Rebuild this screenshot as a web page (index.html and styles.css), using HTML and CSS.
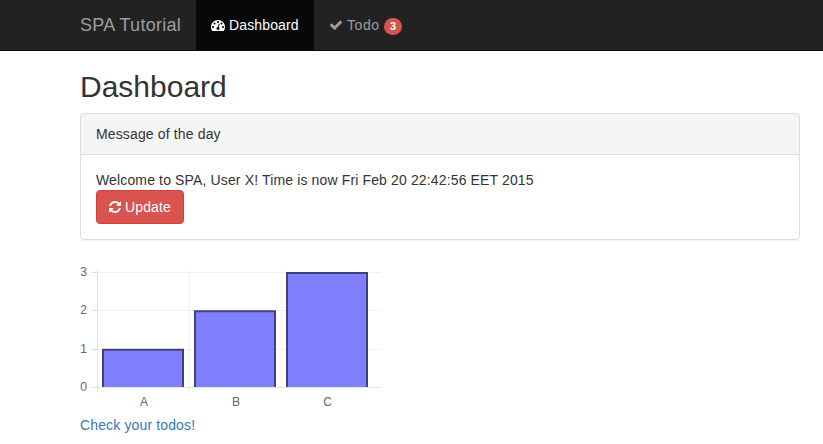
FILE: index.html
```html
<!DOCTYPE html>
<html lang="en">
<head>
<meta charset="utf-8">
<title>SPA Tutorial</title>
<link rel="stylesheet" href="styles.css">
</head>
<body>
<nav class="navbar">
  <div class="container navbar-inner">
    <a class="brand">SPA Tutorial</a>
    <a class="nav-link active"><svg class="icon" viewBox="0 0 1792 1792"><path d="M384 1152q0-53-37.5-90.5t-90.5-37.5-90.5 37.5-37.5 90.5 37.5 90.5 90.5 37.5 90.5-37.5 37.5-90.5zm192-448q0-53-37.5-90.5t-90.5-37.5-90.5 37.5-37.5 90.5 37.5 90.5 90.5 37.5 90.5-37.5 37.5-90.5zm428 481l101-382q6-26-7.5-48.5t-38.5-29.5-48 6.5-30 39.5l-101 382q-60 5-107 43.5t-63 98.5q-20 77 20 146t117 89 146-20 89-117q16-60-6-117t-72-91zm660-33q0-53-37.5-90.5t-90.5-37.5-90.5 37.5-37.5 90.5 37.5 90.5 90.5 37.5 90.5-37.5 37.5-90.5zm-640-640q0-53-37.5-90.5t-90.5-37.5-90.5 37.5-37.5 90.5 37.5 90.5 90.5 37.5 90.5-37.5 37.5-90.5zm448 192q0-53-37.5-90.5t-90.5-37.5-90.5 37.5-37.5 90.5 37.5 90.5 90.5 37.5 90.5-37.5 37.5-90.5zm320 448q0 261-141 483-19 29-54 29h-1402q-35 0-54-29-141-221-141-483 0-182 71-348t191-286 286-191 348-71 348 71 286 191 191 286 71 348z"/></svg><span>Dashboard</span></a>
    <a class="nav-link"><svg class="icon" viewBox="0 0 1792 1792"><path d="M1671 566q0 40-28 68l-724 724-136 136q-28 28-68 28t-68-28l-136-136-362-362q-28-28-28-68t28-68l136-136q28-28 68-28t68 28l294 295 656-657q28-28 68-28t68 28l136 136q28 28 28 68z"/></svg><span class="todo-label">Todo</span><span class="badge">3</span></a>
  </div>
</nav>
<main class="container content">
  <h2>Dashboard</h2>
  <section class="panel">
    <div class="panel-heading">Message of the day</div>
    <div class="panel-body">
      <div>Welcome to SPA, User X! Time is now Fri Feb 20 22:42:56 EET 2015</div>
      <button class="btn"><svg class="icon icon-refresh" viewBox="128 0 1536 1792"><path d="M1639 1056q0 5-1 7-64 268-268 434.5t-478 166.5q-146 0-282.5-55t-243.5-157l-129 129q-19 19-45 19t-45-19-19-45v-448q0-26 19-45t45-19h448q26 0 45 19t19 45-19 45l-137 137q71 66 161 102t187 36q134 0 250-65t186-179q11-17 53-117 8-23 30-23h192q13 0 22.5 9.5t9.5 22.5zm25-800v448q0 26-19 45t-45 19h-448q-26 0-45-19t-19-45 19-45l138-138q-148-137-349-137-134 0-250 65t-186 179q-11 17-53 117-8 23-30 23h-199q-13 0-22.5-9.5t-9.5-22.5v-7q65-268 270-434.5t480-166.5q146 0 284 55.5t245 156.5l130-129q19-19 45-19t45 19 19 45z"/></svg><span>Update</span></button>
    </div>
  </section>
  <svg class="chart" width="300" height="150" viewBox="0 0 300 150">
    <g class="grid">
      <path d="M12 12.5H300M12 50.5H300M12 89.5H300M109.5 9V132M201.5 9V132"/>
      <path class="axis" d="M12 127.5H300M17.5 9V132"/>
      <path class="axis" d="M12 12.5H17M12 50.5H17M12 89.5H17"/>
    </g>
    <g class="bars">
      <path d="M23 127V89.67H103V127"/>
      <path d="M115 127V51.33H195V127"/>
      <path d="M207 127V13H287V127"/>
    </g>
    <g class="labels">
      <text x="7" y="16" class="y-label">3</text>
      <text x="7" y="54" class="y-label">2</text>
      <text x="7" y="93" class="y-label">1</text>
      <text x="7" y="131" class="y-label">0</text>
      <text x="64" y="146">A</text>
      <text x="156" y="146">B</text>
      <text x="247.5" y="146">C</text>
    </g>
  </svg>
  <a class="todo-link">Check your todos!</a>
</main>
</body>
</html>
```
FILE: styles.css
```css
* {
  box-sizing: border-box;
}

body {
  margin: 0;
  background: #fff;
  color: #333;
  font: 14px/20px "Liberation Sans", Arial, sans-serif;
  letter-spacing: 0.14px;
}

.container {
  width: 720px;
  margin-left: 80px;
}

.navbar {
  height: 51px;
  background: #222;
  border-bottom: 1px solid #080808;
}

.navbar-inner {
  display: flex;
}

.brand {
  width: 116px;
  padding: 15px 0;
  color: #9d9d9d;
  font-size: 18px;
  letter-spacing: 0.28px;
  white-space: nowrap;
}

.nav-link {
  display: flex;
  align-items: center;
  gap: 4px;
  height: 50px;
  padding: 0 15px;
  color: #9d9d9d;
}

.nav-link.active {
  width: 118px;
  background: #080808;
  color: #fff;
}

.todo-label {
  width: 33px;
  letter-spacing: 0.6px;
}

.icon {
  flex: none;
  width: 14px;
  height: 14px;
  fill: currentColor;
}

.icon-refresh {
  width: 12px;
}

.badge {
  width: 18px;
  margin-top: 3px;
  padding: 3px 0;
  border-radius: 10px;
  background: #d9534f;
  color: #fff;
  font-size: 11px;
  font-weight: bold;
  letter-spacing: 0;
  line-height: 11px;
  text-align: center;
}

.content {
  padding-top: 19px;
}

h2 {
  margin: 0 0 10px;
  font-size: 30px;
  font-weight: normal;
  letter-spacing: 0;
  line-height: 33px;
}

.panel {
  margin-bottom: 20px;
  border: 1px solid #ddd;
  border-radius: 4px;
  box-shadow: 0 1px 1px rgba(0, 0, 0, 0.05);
}

.panel-heading {
  padding: 10px 15px;
  border-bottom: 1px solid #ddd;
  border-radius: 3px 3px 0 0;
  background: #f5f5f5;
}

.panel-body {
  padding: 15px;
}

.btn {
  display: flex;
  align-items: center;
  gap: 4px;
  width: 88px;
  height: 34px;
  padding: 0 12px;
  border: 1px solid #d43f3a;
  border-radius: 4px;
  background: #d9534f;
  color: #fff;
  font: inherit;
  letter-spacing: inherit;
}

.chart {
  display: block;
  margin-bottom: 5px;
  letter-spacing: 0;
}

.grid path {
  fill: none;
  stroke: rgba(0, 0, 0, 0.05);
}

.grid .axis {
  stroke: rgba(0, 0, 0, 0.1);
}

.bars path {
  fill: #8080ff;
  stroke: #404080;
  stroke-width: 2px;
}

.labels text {
  fill: #666;
  font-size: 12px;
  text-anchor: middle;
}

.labels .y-label {
  text-anchor: end;
}

.todo-link {
  color: #337ab7;
}
```
